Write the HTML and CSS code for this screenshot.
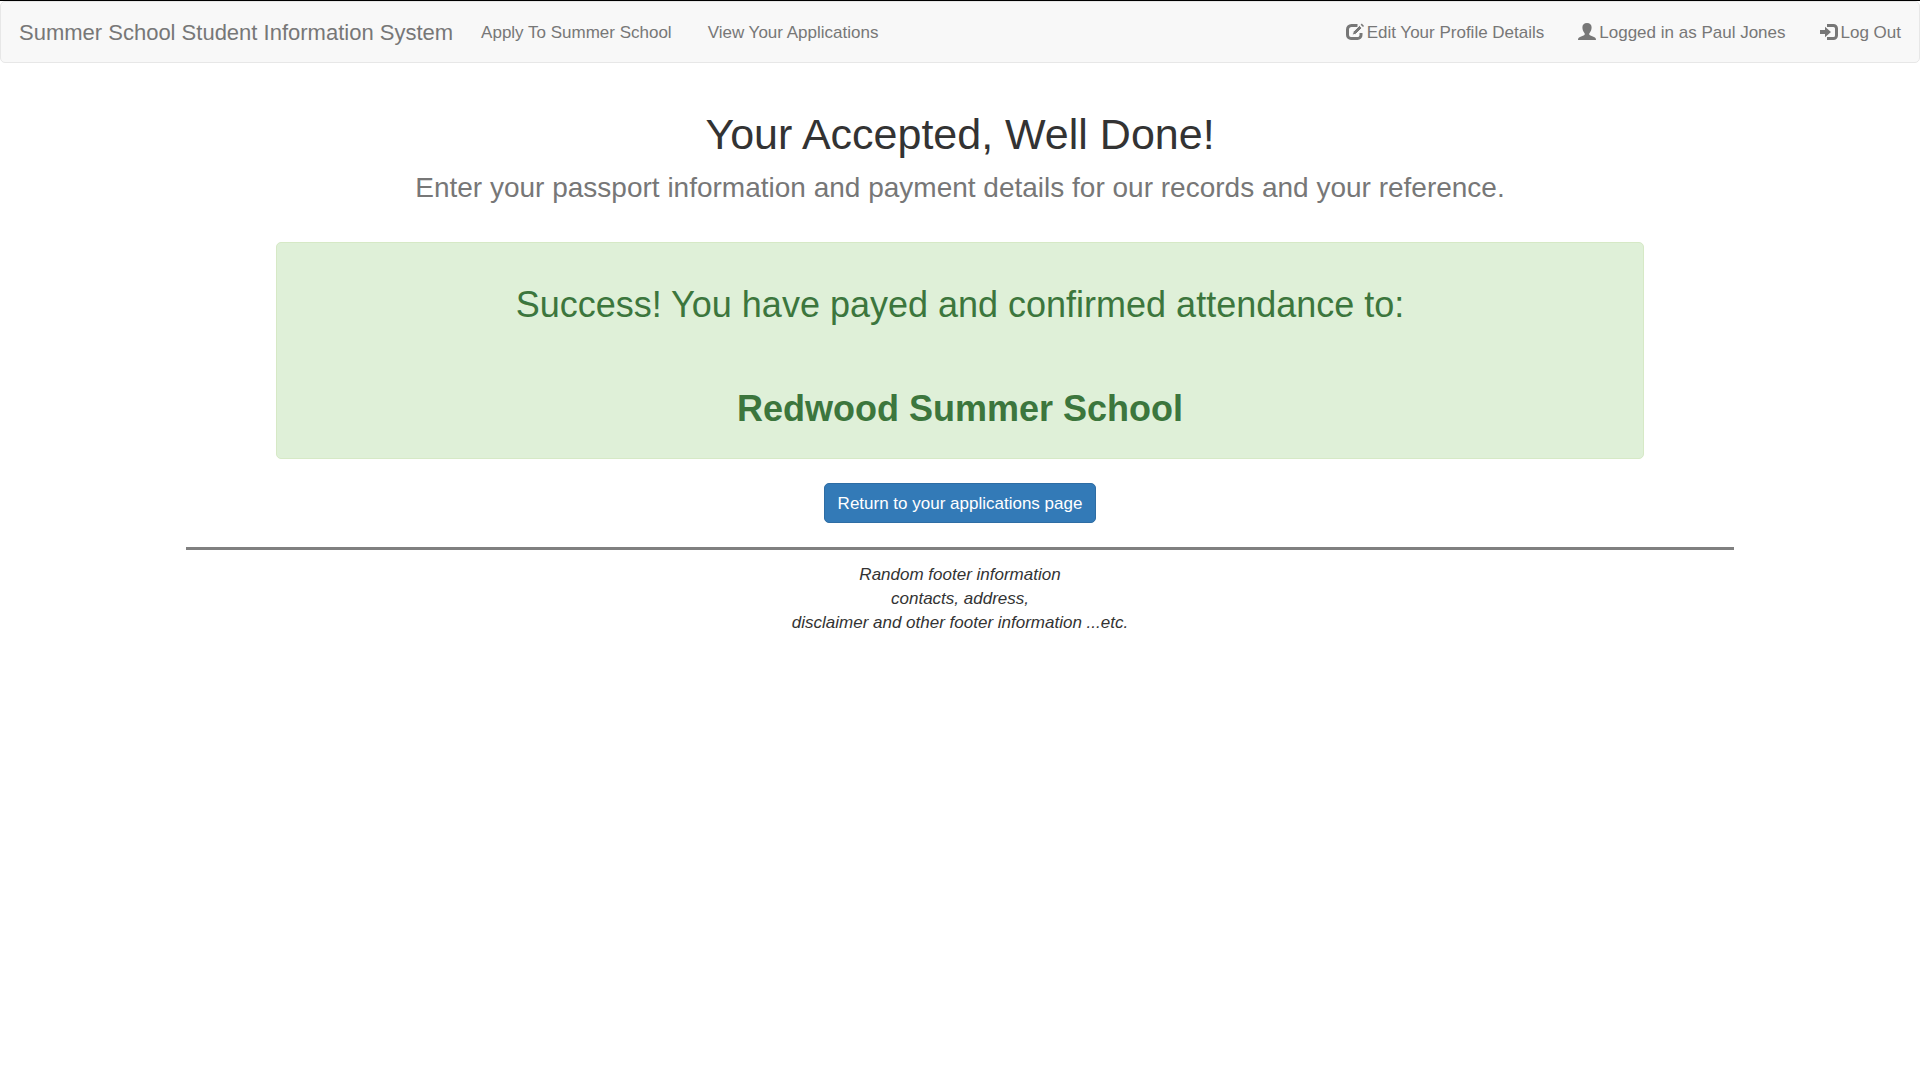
FILE: index.html
```html
<!DOCTYPE html>
<html lang="en">
<head>
  <meta charset="utf-8">
  <meta name="viewport" content="width=device-width, initial-scale=1">
  <title>Summer School Student Information System</title>
  <link rel="stylesheet" href="styles.css">
</head>
<body>
  <nav class="navbar">
    <a class="brand" href="#">Summer School Student Information System</a>
    <ul class="nav">
      <li><a href="#">Apply To Summer School</a></li>
      <li><a href="#">View Your Applications</a></li>
    </ul>
    <ul class="nav nav-right">
      <li><a href="#"><svg class="icon" viewBox="0 0 18 18" aria-hidden="true"><path d="M11.500 2.500H5.500a4 4 0 0 0-4 4v5.500a3.500 3.500 0 0 0 3.500 3.500h6.500a3.500 3.500 0 0 0 3.500-3.500V10" fill="none" stroke="currentColor" stroke-width="3"/><path d="M6.200 12.200 7.300 8.600 13.400 2.500 16 5.100 9.800 11.200z" fill="currentColor" stroke="#f8f8f8" stroke-width="1"/><path d="M14.600 1.700 15.800.600 18 2.900 17 4.100z" fill="currentColor"/></svg>Edit Your Profile Details</a></li>
      <li><a href="#"><svg class="icon" viewBox="0 0 18 18" aria-hidden="true"><path d="M9 0c2.900 0 4.600 1.700 4.600 4.300 0 2.300-.8 4.300-2 5.600-.6.700-.5 1.900.3 2.300l4.100 1.800c1.300.5 2 1.300 2 3H0c0-1.700.7-2.500 2-3l4.100-1.800c.8-.4.900-1.600.3-2.300C5.200 8.600 4.400 6.600 4.400 4.300 4.400 1.700 6.100 0 9 0z" fill="currentColor"/></svg>Logged in as Paul Jones</a></li>
      <li><a href="#"><svg class="icon" viewBox="0 0 18 18" aria-hidden="true"><path d="M7 2.500h6.500a3 3 0 0 1 3 3v7a3 3 0 0 1-3 3H7" fill="none" stroke="currentColor" stroke-width="3"/><path d="M0 7h5V3.700l6 5.300-6 5.300V11H0z" fill="currentColor"/></svg>Log Out</a></li>
    </ul>
  </nav>

  <main class="container">
    <header class="heading">
      <h1>Your Accepted, Well Done!</h1>
      <p class="lead">Enter your passport information and payment details for our records and your reference.</p>
    </header>
    <section class="alert" role="status">
      <p>Success! You have payed and confirmed attendance to:</p>
      <p><strong>Redwood Summer School</strong></p>
    </section>
    <button class="button" type="button">Return to your applications page</button>
  </main>

  <footer class="footer">
    Random footer information<br>
    contacts, address,<br>
    disclaimer and other footer information ...etc.
  </footer>
</body>
</html>
```

FILE: styles.css
```css
* {
  box-sizing: border-box;
}

body {
  margin: 0;
  border-top: 1px solid #000;
  background: #fff;
  color: #333;
  font: 17px/24px "Liberation Sans", Arial, sans-serif;
}

.navbar {
  display: flex;
  align-items: center;
  min-height: 62px;
  margin-bottom: 47px;
  border: 1px solid #e7e7e7;
  border-radius: 5px;
  background: #f8f8f8;
}

.navbar a {
  display: block;
  padding: 19px 18px 17px;
  color: #777;
  text-decoration: none;
  white-space: nowrap;
}

.navbar a:hover {
  color: #333;
}

.navbar .brand {
  padding-right: 10px;
  font-size: 22px;
}

.nav {
  display: flex;
  margin: 0;
  padding: 0;
  list-style: none;
}

.nav-right {
  margin-left: auto;
}

.navbar .nav-right a {
  padding-left: 16px;
}

.icon {
  width: 18px;
  height: 18px;
  margin-right: 3px;
  vertical-align: -3px;
}

.container {
  max-width: 1404px;
  margin: 0 auto;
  padding: 0 18px;
  text-align: center;
}

h1 {
  margin: 0;
  font-size: 43px;
  font-weight: 500;
  line-height: 48px;
}

.lead {
  margin: 10px 0 34px;
  font-size: 28px;
  line-height: 40px;
  color: #777;
}

.alert {
  margin-bottom: 24px;
  padding: 42px 18px 29px;
  border: 1px solid #d6e9c6;
  border-radius: 5px;
  background: #dff0d8;
  color: #3c763d;
  font-size: 36px;
  line-height: 40px;
}

.alert p {
  margin: 0;
}

.alert p + p {
  margin-top: 64px;
}

.button {
  padding: 8px 13px 6px;
  border: 1px solid #2e6da4;
  border-radius: 5px;
  background: #337ab7;
  color: #fff;
  font: inherit;
  cursor: pointer;
}

.footer {
  max-width: 1548px;
  margin: 24px auto;
  padding-top: 13px;
  border-top: 3px solid #808080;
  font-style: italic;
  text-align: center;
}
```
